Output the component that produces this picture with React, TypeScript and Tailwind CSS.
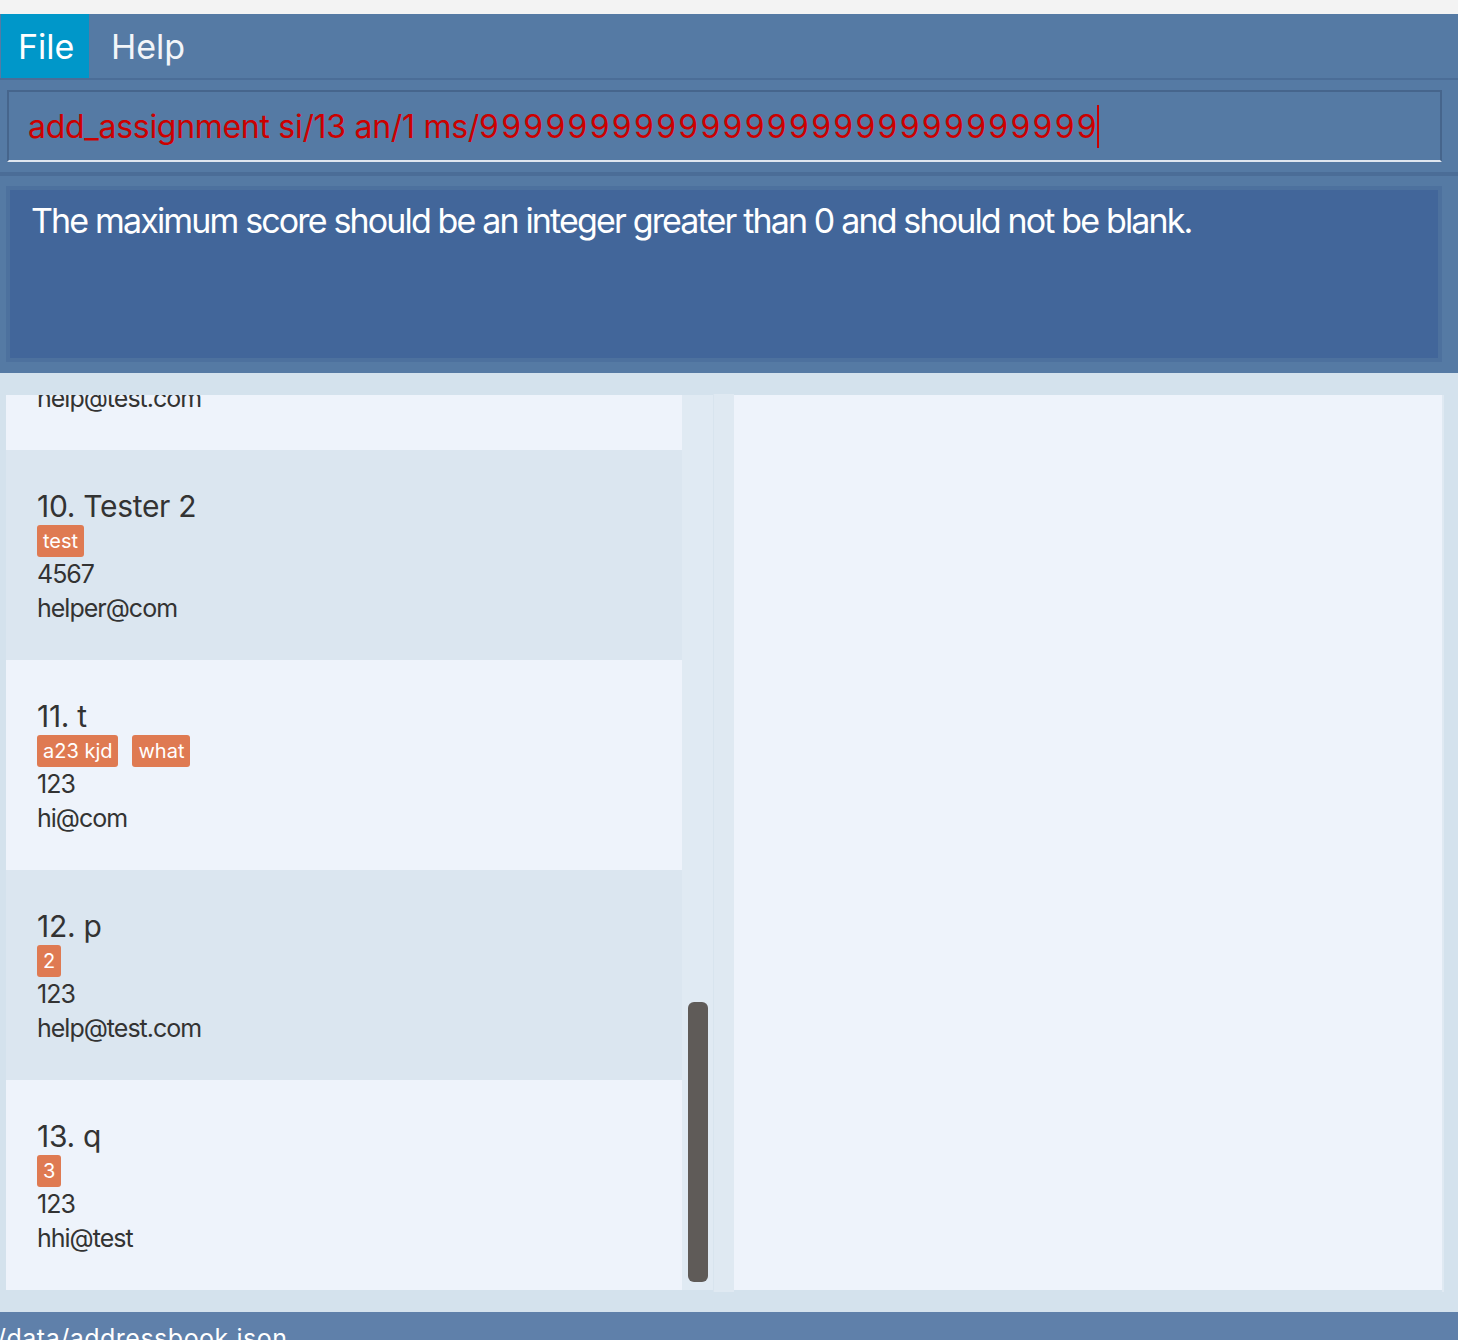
import React from "react";

type Person = {
  idx: number;
  name: string;
  tags: string[];
  phone: string;
  email: string;
};

const people: Person[] = [
  { idx: 9, name: "Tester", tags: ["friends"], phone: "123", email: "help@test.com" },
  { idx: 10, name: "Tester 2", tags: ["test"], phone: "4567", email: "helper@com" },
  { idx: 11, name: "t", tags: ["a23 kjd", "what"], phone: "123", email: "hi@com" },
  { idx: 12, name: "p", tags: ["2"], phone: "123", email: "help@test.com" },
  { idx: 13, name: "q", tags: ["3"], phone: "123", email: "hhi@test" },
];

function Card({ p, dark }: { p: Person; dark: boolean }) {
  return (
    <div
      className={
        "h-[210px] shrink-0 pl-[31px] pt-[38px] text-[#333333] " +
        (dark ? "bg-[#dbe6f0]" : "bg-[#eef3fb]")
      }
    >
      <div className="whitespace-nowrap text-[30px] leading-[36px] tracking-[-0.3px]">
        {p.idx}. {p.name}
      </div>
      <div className="mt-[1px] flex h-[32px] gap-[14px]">
        {p.tags.map((t) => (
          <span
            key={t}
            className="flex h-[32px] items-center rounded-[3px] bg-[#df7a52] px-[6px] text-[20px] leading-[24px] text-white"
          >
            {t}
          </span>
        ))}
      </div>
      <div className="text-[25px] leading-[34px] tracking-[-1px]">{p.phone}</div>
      <div className="text-[25px] leading-[34px] tracking-[-1px]">{p.email}</div>
    </div>
  );
}

export default function App() {
  const nines = "9".repeat(28);
  return (
    <div className="flex h-[1340px] w-[1458px] flex-col overflow-hidden font-['Inter','Noto_Sans',sans-serif]">
      {/* window chrome */}
      <div className="h-[14px] shrink-0 bg-[#f3f3f3]" />

      {/* menu bar */}
      <div className="flex h-[66px] shrink-0 items-stretch border-b-2 border-[#4b6d97] bg-[#557aa4]">
        <div className="ml-[1px] flex w-[88px] items-center bg-[#0097c9] pl-[17px] text-[34px] leading-[41px] text-white">
          File
        </div>
        <div className="flex items-center pl-[22px] text-[34px] leading-[41px] text-[#f2f5f9]">
          Help
        </div>
      </div>

      {/* command box */}
      <div className="shrink-0 border-b-4 border-[#4b6d97] bg-[#557aa4] pb-[10px] pl-[7px] pr-[16px] pt-[10px]">
        <div className="flex h-[72px] items-center border-x-2 border-t-2 border-b-2 border-x-[#46658c] border-t-[#46658c] border-b-[#dfe7f0] pl-[19px]">
          <span className="whitespace-nowrap text-[32px] leading-[39px] text-[#cc0000]">
            <span className="tracking-[-0.3px]">add_assignment si/13 an/1 ms/</span>
            <span className="tracking-[2.3px]">{nines}</span>
          </span>
          <span className="-ml-[2px] h-[43px] w-[2px] bg-[#cc0000]" />
        </div>
      </div>

      {/* result display */}
      <div className="shrink-0 bg-[#557aa4] pb-[11px] pl-[6px] pr-[16px] pt-[10px]">
        <div className="h-[176px] border-4 border-[#4d719e] bg-[#42669a] pl-[21px] pt-[10px]">
          <div className="whitespace-nowrap text-[34px] leading-[41px] tracking-[-1.85px] text-white">
            The maximum score should be an integer greater than 0 and should not be blank.
          </div>
        </div>
      </div>

      {/* main area */}
      <div className="flex flex-1 bg-[#d4e2ed] pl-[6px] pt-[22px]">
        <div className="flex h-[895px] w-[676px] flex-col overflow-hidden">
          <div className="-mt-[155px] flex flex-col">
            {people.map((p, i) => (
              <Card key={p.idx} p={p} dark={i % 2 === 1} />
            ))}
          </div>
        </div>
        {/* scrollbar */}
        <div className="relative h-[895px] w-[31px] bg-[#e0eaf3]">
          <div className="absolute left-[6px] top-[607px] h-[280px] w-[20px] rounded-[6px] bg-[#5f5b58]" />
        </div>
        <div className="-mt-[1px] h-[898px] w-[21px] border-l border-[#d8e4ee] bg-[#dfe9f2]" />
        <div className="h-[895px] w-[708px] bg-[#eef3fb]" />
        <div className="h-[897px] w-[2px] bg-[#dfe9f2]" />
      </div>

      {/* status bar */}
      <div className="h-[28px] shrink-0 bg-[#5f80aa] pt-[11px]">
        <div className="-ml-[3px] whitespace-nowrap text-[25px] leading-[30px] tracking-[0.5px] text-white">
          /data/addressbook.json
        </div>
      </div>
    </div>
  );
}
